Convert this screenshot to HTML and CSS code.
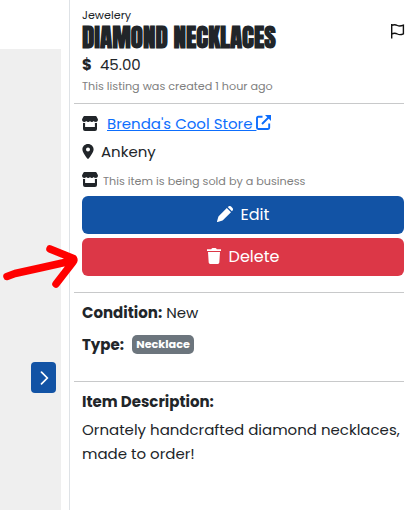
FILE: index.html
```html
<!DOCTYPE html>
<html lang="en">
<head>
    <meta charset="UTF-8">
    <meta name="viewport" content="width=device-width, initial-scale=1.0">
    <title>Diamond Necklaces</title>
    <link rel="stylesheet" href="styles.css">
</head>
<body>

    <!-- Icons used more than once -->
    <svg class="sprite">
        <symbol id="store" viewBox="0 0 16 15">
            <path d="M2.3 0h11.4q.5 0 .8.5l1.3 2.4c.5 1.4-.2 3.1-2 3.1-1 0-1.600-.4-2-.9-.5.600-1.200.9-2 .9S8.400 5.700 8 5.100C7.600 5.700 7 6 6.200 6s-1.500-.3-2-.9c-.4.500-1.100.9-2 .9C.4 6-.3 4.300.2 2.900L1.500.5Q1.800 0 2.300 0z"/>
            <path d="M1 6.800q1.300.4 2.100 0V11h9.800V6.800q1 .4 2.100 0V13q0 2-2 2H3q-2 0-2-2z"/>
        </symbol>
    </svg>

    <!-- Image carousel -->
    <div class="gallery">
        <div class="slide">
            <button class="next" aria-label="Next">
                <svg width="9" height="14" viewBox="0 0 9 14"><path d="M1.500 1.200L7.300 7l-5.800 5.800"/></svg>
            </button>
        </div>
    </div>

    <!-- Listing details -->
    <div class="details">
        <div class="header">
            <div class="category">Jewelery</div>
            <h1>DIAMOND NECKLACES</h1>
            <div class="price"><b>$</b><span>45.00</span></div>
            <div class="created">This listing was created 1 hour ago</div>
            <svg class="flag" width="15" height="17" viewBox="0 0 15 17"><path d="M1.700 1v14.500M1.700 2.500c2.800-1.500 4.200-.8 5.700 0s3.200.9 6-.3v8.600c-2.800 1.300-4.500 1-6 .2s-2.900-1.400-5.700 0"/></svg>
        </div>

        <div class="seller">
            <div class="row">
                <svg width="16" height="15"><use href="#store"/></svg>
                <a href="#">Brenda's Cool Store <svg class="external" width="15" height="15" viewBox="0 0 15 15"><path d="M6.500 1.800H2.200Q1 1.800 1 3v9.800Q1 14 2.200 14H12q1.200 0 1.200-1.200V8.500M6 9l7.500-7.500"/><path class="tip" d="M9 0h6v6z"/></svg></a>
            </div>
            <div class="row place">
                <svg width="12" height="15" viewBox="0 0 12 15"><path fill-rule="evenodd" d="M6 0c3.200 0 5.600 2.400 5.600 5.500 0 2.700-3.500 7-4.900 9.100q-.7.8-1.400 0C3.900 12.500.4 8.200.4 5.500.4 2.400 2.800 0 6 0zm0 3.600a2 2 0 100 4 2 2 0 000-4z"/></svg>
                <span>Ankeny</span>
            </div>
            <div class="row business">
                <svg width="16" height="15"><use href="#store"/></svg>
                <span>This item is being sold by a business</span>
            </div>
            <button class="btn edit">
                <svg width="16" height="16" viewBox="0 0 16 16"><path d="M10.700 1.100l.8-.7q1.300-.9 2.600.1l1.400 1.400q1 1.300.1 2.600l-.7.8zM9.800 2l4.200 4.200-7.900 7.900q-.5.500-1.300.7L.600 16q-.7.100-.6-.6l1.200-4.200q.2-.8.700-1.300z"/></svg>
                <span>Edit</span>
            </button>
            <button class="btn delete">
                <svg width="14" height="16" viewBox="0 0 14 16"><path d="M0 1.200h4.200L4.700.4Q5 0 5.500 0h3q.5 0 .8.4l.5.8H14V3H0zM1 4h12l-.7 10.600Q12.200 16 10.800 16H3.200q-1.400 0-1.500-1.400z"/></svg>
                <span>Delete</span>
            </button>
        </div>

        <div class="specs">
            <div class="spec condition"><b>Condition:</b><span>New</span></div>
            <div class="spec type"><b>Type:</b><span class="badge">Necklace</span></div>
        </div>

        <div class="description">
            <h2>Item Description:</h2>
            <p>Ornately handcrafted diamond necklaces, made to order!</p>
        </div>
    </div>

    <!-- Arrow pointing at the delete button -->
    <svg class="arrow" width="80" height="50" viewBox="0 0 80 50"><path d="M7 34.500L15 31.500L40 26L73.500 18.500M50 7L73.500 16.500Q74.500 18 73 20L56 42"/></svg>

</body>
</html>
```
FILE: styles.css
```css
* {
    box-sizing: border-box;
    margin: 0;
    padding: 0;
}

body {
    display: flex;
    height: 510px;
    overflow: hidden;
    background: #fff;
    color: #212529;
    font-family: Poppins, Inter, sans-serif;
    font-size: 15px;
}

svg {
    flex: none;
    fill: currentColor;
}

.sprite {
    position: absolute;
    width: 0;
    height: 0;
}

/* Carousel */
.gallery {
    flex: none;
    width: 69px;
    padding: 49px 8px 0 0;
}

.slide {
    display: flex;
    justify-content: flex-end;
    height: 461px;
    padding: 313px 5px 0 0;
    background: #efefef;
}

.next {
    display: flex;
    align-items: center;
    justify-content: center;
    width: 25px;
    height: 31px;
    border: none;
    border-radius: 4px;
    background: #1253a5;
    color: #fff;
}

.next svg {
    margin-left: 2px;
    fill: none;
    stroke: currentColor;
    stroke-width: 1.7;
    stroke-linecap: round;
}

/* Details */
.details {
    flex: 1;
    min-width: 0;
    padding: 0 4px;
    border-left: 1px solid #dee2e6;
}

.header,
.seller,
.specs,
.description {
    padding-left: 8px;
}

.header,
.seller,
.specs {
    border-bottom: 1px solid #c8c9ca;
}

.header {
    position: relative;
    height: 104px;
    padding-top: 8px;
}

.category {
    font-size: 11.2px;
    line-height: 14px;
}

h1 {
    height: 30px;
    font-family: Anton, "Open Sans", sans-serif;
    font-size: 25px;
    font-weight: 700;
    line-height: 32px;
    white-space: nowrap;
}

.price {
    display: flex;
    gap: 8px;
    line-height: 25px;
}

.created {
    color: #808080;
    font-size: 11.2px;
    line-height: 18px;
}

.flag {
    position: absolute;
    top: 23px;
    right: -1px;
    fill: none;
    stroke: #111;
    stroke-width: 1.4;
}

.seller {
    height: 189px;
    padding-top: 5px;
}

.row {
    display: flex;
    align-items: center;
    gap: 9px;
    height: 28px;
}

.row a {
    color: #0d6efd;
}

.external {
    vertical-align: -1px;
    fill: none;
    stroke: currentColor;
    stroke-width: 1.9;
}

.external .tip {
    fill: currentColor;
    stroke: none;
}

.place {
    gap: 7px;
}

.business {
    gap: 5px;
    height: 31px;
}

.business svg {
    margin-bottom: 2px;
}

.business span {
    padding-top: 1px;
    color: #808080;
    font-size: 11.2px;
}

.btn {
    display: flex;
    align-items: center;
    justify-content: center;
    gap: 8px;
    width: 100%;
    height: 38px;
    margin-bottom: 4px;
    padding-bottom: 2px;
    border: none;
    border-radius: 6px;
    color: #fff;
    font-family: inherit;
    font-size: 16px;
}

.edit {
    background: #1253a5;
}

.delete {
    background: #dc3747;
}

.specs {
    height: 89px;
    padding-top: 3px;
}

.spec {
    display: flex;
    align-items: center;
    gap: 4px;
    height: 32px;
}

.type {
    gap: 8px;
}

.badge {
    width: 62px;
    height: 19px;
    border-radius: 5px;
    background: #6c757d;
    color: #fff;
    font-size: 11.2px;
    font-weight: 700;
    line-height: 19px;
    text-align: center;
}

.description {
    padding-top: 7px;
}

h2 {
    margin-bottom: 4px;
    font-size: 15px;
    line-height: 25px;
}

.description p {
    line-height: 24px;
}

.arrow {
    position: absolute;
    top: 242px;
    left: 0;
    fill: none;
    stroke: #f00;
    stroke-width: 7.5;
    stroke-linecap: round;
    stroke-linejoin: round;
}
```
